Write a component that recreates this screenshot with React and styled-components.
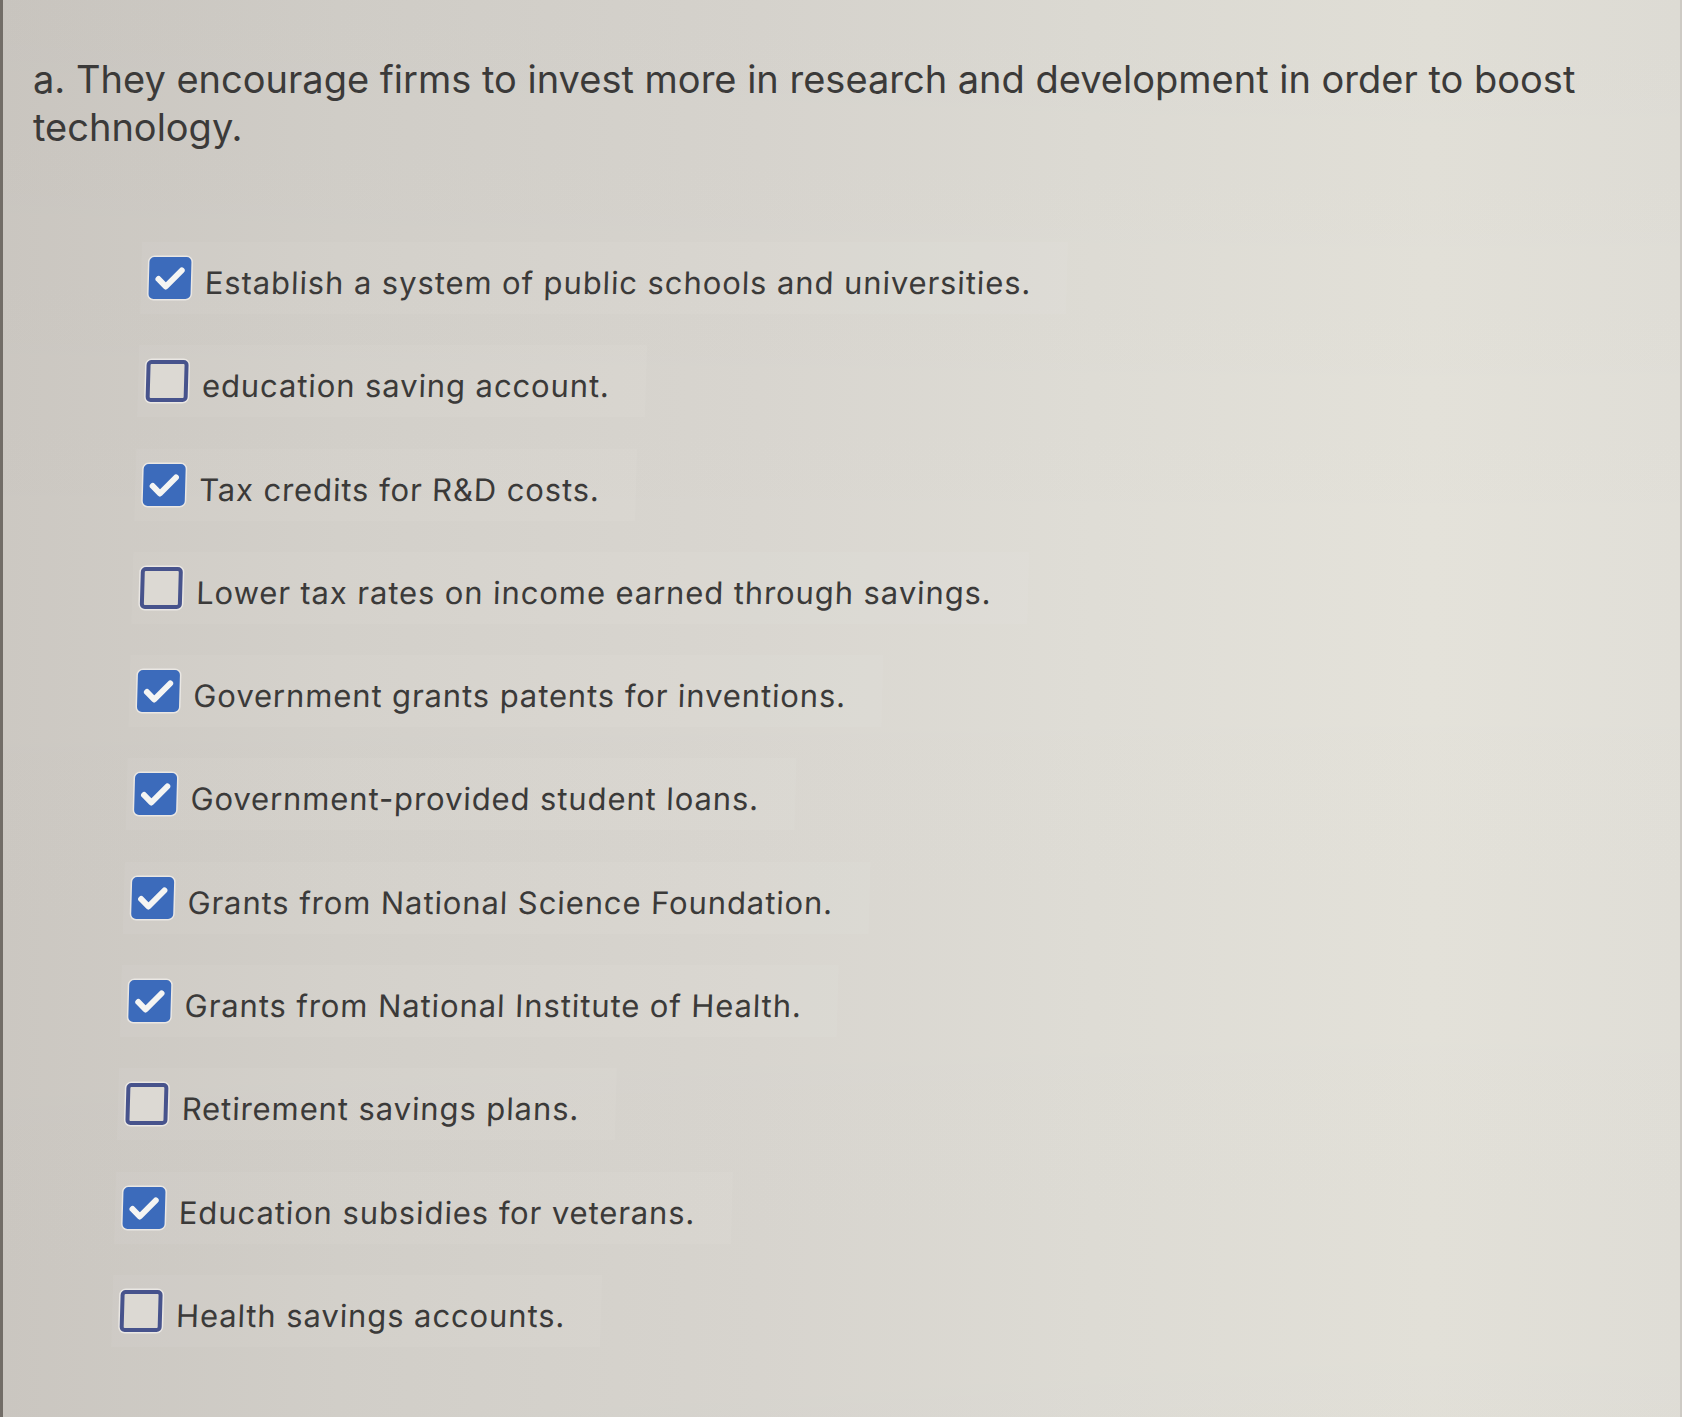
import React from 'react';
import styled, { createGlobalStyle } from 'styled-components';

const GlobalStyle = createGlobalStyle`
	html, body {
		margin: 0;
		padding: 0;
		background: #d8d5cf;
	}
	* {
		box-sizing: border-box;
	}
`;

const options = [
	{ text: 'Establish a system of public schools and universities.', checked: true },
	{ text: 'education saving account.', checked: false },
	{ text: 'Tax credits for R&D costs.', checked: true },
	{ text: 'Lower tax rates on income earned through savings.', checked: false },
	{ text: 'Government grants patents for inventions.', checked: true },
	{ text: 'Government-provided student loans.', checked: true },
	{ text: 'Grants from National Science Foundation.', checked: true },
	{ text: 'Grants from National Institute of Health.', checked: true },
	{ text: 'Retirement savings plans.', checked: false },
	{ text: 'Education subsidies for veterans.', checked: true },
	{ text: 'Health savings accounts.', checked: false },
];

const CheckMark = () => (
	<svg width="42" height="42" viewBox="0 0 42 42">
		<path
			d="M9.5 22 L17 29.5 L32.5 13.5"
			fill="none"
			stroke="#f5f5f3"
			strokeWidth="6"
			strokeLinecap="round"
			strokeLinejoin="round"
		/>
	</svg>
);

const App = () => {
	return (
		<>
			<GlobalStyle />
			<Page>
				<Question>
					a. They encourage firms to invest more in research and development in order to boost
					technology.
				</Question>
				<OptionList>
					{options.map((item, idx) => (
						<OptionRow key={idx}>
							<Box checked={item.checked}>{item.checked && <CheckMark />}</Box>
							<Label>{item.text}</Label>
						</OptionRow>
					))}
				</OptionList>
			</Page>
		</>
	);
};

export default App;

const Page = styled.div`
	width: 100%;
	height: 1417px;
	overflow: hidden;
	padding: 55px 0 0 30px;
	border-left: 3px solid #726d67;
	border-right: 2px solid #cdcac4;
	background:
		linear-gradient(180deg, rgba(0, 0, 0, 0.02) 0%, rgba(0, 0, 0, 0) 40%, rgba(0, 0, 0, 0.01) 100%),
		linear-gradient(90deg, #ccc8c2 0%, #d3d0ca 20%, #d9d6d0 45%, #dfddd6 65%, #e4e2da 85%, #e1dfd8 100%);
	font-family: Inter, 'Open Sans', sans-serif;
`;

const Question = styled.p`
	margin: 0;
	width: 1600px;
	font-size: 38px;
	line-height: 48px;
	color: #3b3a39;
`;

const OptionList = styled.div`
	display: flex;
	flex-direction: column;
	gap: 31.3px;
	margin: 91px 0 0 109px;
	transform: skewX(-1.6deg);
	transform-origin: top left;
`;

const OptionRow = styled.div`
	align-self: flex-start;
	display: flex;
	align-items: center;
	height: 72px;
	padding: 0 36px 0 8px;
	background: rgba(255, 255, 255, 0.05);
`;

const Box = styled.div`
	flex: none;
	width: 42px;
	height: 42px;
	border-radius: 5px;
	background: ${(prop) => (prop.checked ? '#3c6bbb' : '#dcd9d3')};
	border: ${(prop) => (prop.checked ? 'none' : '4px solid #47538c')};
	box-shadow: 0 0 0 1.5px rgba(240, 238, 234, 0.8);
	display: flex;
	align-items: center;
	justify-content: center;
`;

const Label = styled.span`
	margin: 10px 0 0 14px;
	font-size: 31px;
	letter-spacing: 0.9px;
	line-height: 42px;
	color: #3b3a39;
	white-space: nowrap;
`;
